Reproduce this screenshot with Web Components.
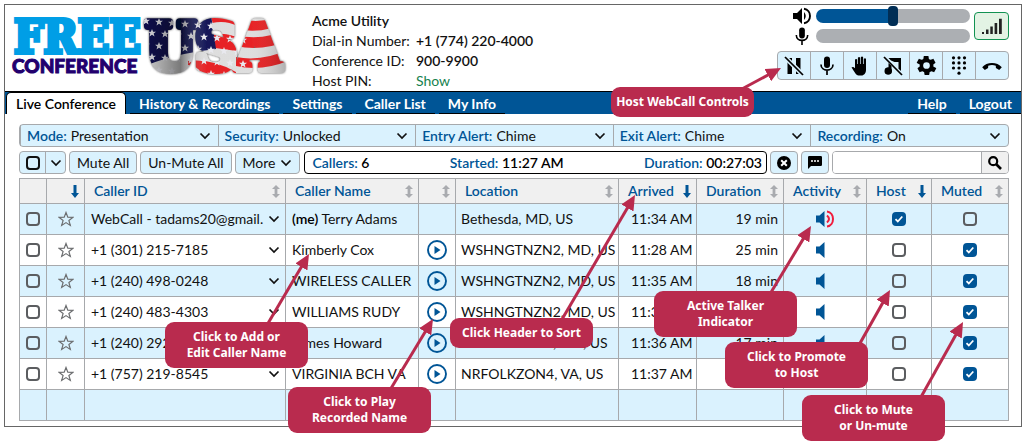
<!DOCTYPE html>
<html lang="en">
<head>
<meta charset="utf-8">
<title>Live Conference</title>
<style>
  body { margin: 0; background: #fff; color: #111; font-family: Lato, "Liberation Sans", sans-serif; font-size: 14px; line-height: 20px;
    --blue: #005596; --pale: #daf2fe; --line: #a7a9ac; --berry: #b92b4e; --medium: 600; }
</style>
</head>
<body>
<conference-app></conference-app>
<script>
const ICONS = {
  chevron: ['0 0 12 8', '<path d="M1.500 1.500 6 6l4.500-4.500" fill="none" stroke="currentColor" stroke-width="1.700"/>'],
  down: ['0 0 8 13', '<path d="M2.500 0h3v8H8l-4 5-4-5h2.500z" fill="currentColor"/>'],
  updown: ['0 0 8 13', '<path d="M4 0l4 4H5.400v5H8l-4 4-4-4h2.600V4H0z" fill="currentColor"/>'],
  star: ['0 0 16 16', '<path d="M8 1.500l1.800 4.700 5 .2-3.900 3.100 1.400 4.900L8 11.600l-4.300 2.800 1.400-4.900L1.200 6.400l5-.2z" fill="none" stroke="currentColor" stroke-width="1.200"/>'],
  play: ['0 0 20 20', '<circle cx="10" cy="10" r="9" fill="none" stroke="currentColor" stroke-width="1.900"/><path d="M7.500 6v8l6-4z" fill="currentColor"/>'],
  speaker: ['0 0 20 18', '<path d="M1 6h4l5-5v16l-5-5H1z" fill="currentColor"/><path d="M12 5q3.500 4 0 8z" fill="currentColor"/><path d="M12 1.800c8 1 8 13.400 0 14.400" fill="none" stroke="currentColor" stroke-width="1.900"/>'],
  quiet: ['0 0 20 18', '<path d="M1 5.500h3.500l5-4.500v16l-5-4.500H1z" fill="currentColor"/>'],
  talking: ['0 0 20 18', '<path d="M1 5.500h3.500l5-4.500v16l-5-4.500H1z" fill="currentColor"/><path d="M12 5.500q4 3.500 0 7" fill="none" stroke="#f01c3c" stroke-width="2"/><path d="M12 1.500c8 1 8 14 0 15" fill="none" stroke="#f01c3c" stroke-width="2"/>'],
  mic: ['0 0 14 20', '<rect x="4" y="0.500" width="6" height="11.500" rx="3" fill="currentColor"/><path d="M1 8.500c0 7.500 12 7.500 12 0M7 14v5" fill="none" stroke="currentColor" stroke-width="1.700"/>'],
  pause: ['0 0 20 20', '<path d="M3.500 2H8v16H3.500zM12 2h4.500v16H12z" fill="currentColor"/><path d="M1 1l18 18" stroke="#daf2fe" stroke-width="4.500"/><path d="M1 1l18 18" stroke="currentColor" stroke-width="1.700"/>'],
  hand: ['0 0 20 20', '<path d="M5 3.500q1.200-1 2.200 0V8h.7V1.700q1.200-1.200 2.300 0V8h.7V1q1.200-1 2.200 0v7h.7V2.700q1.200-1 2.200 0V14c0 3-2 5.500-4.500 5.500H8.500C6 19.500 4 15 1.500 11.500q1.500-1.500 3.500.8z" fill="currentColor"/>'],
  music: ['0 0 20 20', '<path d="M5.500 2H18v13l-2.500-2.200V6h-4L8 4.500zM5.500 7l3 2.700V15a3.500 3.500 0 1 1-3-3.400z" fill="currentColor"/><circle cx="5.500" cy="15" r="3.500" fill="currentColor"/><path d="M1 1l18 18" stroke="currentColor" stroke-width="1.700"/>'],
  gear: ['0 0 24 24', '<path fill="currentColor" d="M19.100 13c0-.3.100-.6.100-1s0-.7-.1-1l2.100-1.600c.2-.1.200-.4.100-.6l-2-3.500c-.1-.2-.4-.3-.6-.2l-2.500 1c-.5-.4-1.100-.7-1.700-1l-.4-2.600c0-.2-.2-.4-.5-.4h-4c-.3 0-.5.200-.5.400l-.4 2.600c-.6.300-1.200.6-1.700 1l-2.500-1c-.2-.1-.5 0-.6.200l-2 3.500c-.1.200-.1.500.1.600L4.900 11v2l-2.100 1.600c-.2.100-.2.400-.1.600l2 3.500c.1.200.4.300.6.200l2.500-1c.5.400 1.100.7 1.700 1l.4 2.600c0 .2.200.4.500.4h4c.3 0 .5-.2.500-.4l.4-2.600c.6-.3 1.200-.6 1.700-1l2.500 1c.2.100.5 0 .6-.2l2-3.500c.1-.2.100-.5-.1-.6zM12 15.500a3.500 3.500 0 1 1 0-7 3.500 3.500 0 0 1 0 7z"/>'],
  keypad: ['0 0 16 20', '<g fill="currentColor">' + [1.8, 6.900, 12].map(y => [2.500, 8, 13.500].map(x => `<circle cx="${x}" cy="${y}" r="1.600"/>`).join('')).join('') + '<circle cx="8" cy="17.200" r="1.600"/></g>'],
  hangup: ['0 0 22 20', '<path d="M1.200 11.200C5.500 5.500 16.500 5.500 20.800 11.200l-2.600 2.700-3.300-1.900-.1-2.300q-3.800-1.400-7.600 0L7.100 12l-3.300 1.900z" fill="currentColor"/>'],
  signal: ['0 0 20 16', '<path d="M0 14h2v2H0zM4 11.500h2.500V16H4zM8.300 8.500h2.500V16H8.300zM12.600 5h2.600v11h-2.600zM17 .8h2.800V16H17z" fill="currentColor"/>'],
  close: ['0 0 14 14', '<circle cx="7" cy="7" r="7" fill="currentColor"/><path d="M4.200 4.200l5.600 5.600M9.800 4.200 4.200 9.800" stroke="#fff" stroke-width="2"/>'],
  chat: ['0 0 14 13', '<path d="M1.200 0h11.600Q14 0 14 1.200v7.600q0 1.200-1.200 1.200H3L0 13V1.200Q0 0 1.200 0z" fill="currentColor"/><path d="M3 5h2M6 5h2M9 5h2" stroke="#fff" stroke-width="1.600"/>'],
  search: ['0 0 14 14', '<circle cx="5.200" cy="5.200" r="4" fill="none" stroke="currentColor" stroke-width="2.200"/><path d="M8 8l5 5" stroke="currentColor" stroke-width="2.600"/>']
};
const icon = (name, w, h) => `<svg class="icon" aria-hidden="true" width="${w}" height="${h}" viewBox="${ICONS[name][0]}">${ICONS[name][1]}</svg>`;

const COMMON = `*{box-sizing:border-box} svg{display:block;flex:none}
  button,input,select{font:inherit;color:inherit;margin:0}
  button{padding:0;border:0;background:none;cursor:pointer}`;
const CHECKBOX = `input[type=checkbox]{appearance:none;display:block;width:14px;height:14px;margin:0 auto;border:2px solid #5b5d60;border-radius:4px;background:transparent}
  input[type=checkbox]:checked{border-color:var(--blue);background:var(--blue) url("data:image/svg+xml,%3Csvg xmlns='http://www.w3.org/2000/svg' viewBox='0 0 10 10'%3E%3Cpath d='M1.500 5.200l2.300 2.300 4.500-5' fill='none' stroke='white' stroke-width='1.800'/%3E%3C/svg%3E") center/10px no-repeat}`;

function define(name, styles, markup) {
  customElements.define(name, class extends HTMLElement {
    connectedCallback() {
      if (this.shadowRoot) return;
      const root = this.attachShadow({ mode: 'open' });
      root.innerHTML = `<style>${COMMON}${styles}</style>` + (typeof markup === 'function' ? markup(this) : markup);
    }
  });
}

define('brand-logo', ':host{display:block} a{display:block}', () => {
  let stars = '';
  for (let r = 0; r < 5; r++) for (let c = 0; c < 8; c++) {
    const x = 146 + c * 13 + (r % 2) * 6, y = 21 + r * 12 + c;
    stars += `<path transform="translate(${x} ${y})" d="M0-4 1.100-1.200 4-1.200 1.700.6 2.500 3.400 0 1.800-2.500 3.400-1.700.6-4-1.200-1.100-1.200z" fill="#e8e8ee"/>`;
  }
  return `<a href="#"><svg width="290" height="80" viewBox="5 5 290 80" role="img" aria-label="Free Conference USA">
    <defs>
      <linearGradient id="shade" x1="0" x2="1"><stop offset="0" stop-color="#000" stop-opacity="0"/><stop offset=".28" stop-color="#000" stop-opacity=".45"/><stop offset=".45" stop-color="#fff" stop-opacity=".05"/><stop offset=".75" stop-color="#fff" stop-opacity=".05"/><stop offset="1" stop-color="#000" stop-opacity=".25"/></linearGradient>
      <pattern id="flag" patternUnits="userSpaceOnUse" x="138" y="8" width="152" height="72">
        <g transform="translate(-138 -8)">
          <rect x="138" y="8" width="152" height="72" fill="#dcdcdc"/>
          <path d="M188 61Q212 58 236 72V80H205Q200 66 188 65z" fill="#e6191c"/>
          <path d="M210 14q14-4 27 4v9q-12-6-24-3zM213 34q14-2 24 3v14l-22-3z" fill="#e6191c"/>
          <path d="M236 35Q262 42 290 28V40Q262 52 236 46zM236 57Q262 62 290 49V60Q262 72 236 66z" fill="#e6191c"/>
          <path d="M236 18q27 8 54-6v9q-27 14-54 8z" fill="#e6191c"/>
          <path d="M138 8h72l6 41Q170 54 138 69z" fill="#0a0d50"/>
          ${stars}
          <path d="M211 8h26v6q-13-4-26 0zM212 23q14-3 25 3v11q-12-5-24-3z" fill="#dcdcdc"/>
          <rect x="138" y="8" width="152" height="72" fill="url(#shade)"/>
        </g>
      </pattern>
      <filter id="soft" x="-10%" y="-10%" width="120%" height="120%"><feDropShadow dx="0" dy="0" stdDeviation="1" flood-color="#444"/></filter>
    </defs>
    <text x="14" y="53" font-family="DejaVu Serif Condensed, DejaVu Serif" font-weight="700" font-size="46" fill="#009ee6" stroke="#009ee6" stroke-width="4">FREE</text>
    <text x="12" y="73" font-family="Lato" font-weight="900" font-size="19" fill="#22006e" stroke="#22006e" stroke-width="1">CONFERENCE</text>
    <text x="146" y="69" font-family="DejaVu Serif Condensed, DejaVu Serif" font-weight="700" font-size="63" fill="url(#flag)" stroke="url(#flag)" stroke-width="8" stroke-linejoin="round" filter="url(#soft)">USA</text>
  </svg></a>`;
});

define('conference-info', `:host{display:block;padding-top:6px;white-space:nowrap}
  h1,dl,dd{margin:0} h1{font-size:14px;font-weight:var(--medium);line-height:20px}
  dl{display:grid;grid-template-columns:104px auto} dd{font-weight:var(--medium)} a{color:#16824f;font-weight:400;text-decoration:none}`,
  `<h1>Acme Utility</h1><dl><dt>Dial-in Number:</dt><dd>+1 (774) 220-4000</dd><dt>Conference ID:</dt><dd>900-9900</dd><dt>Host PIN:</dt><dd><a href="#">Show</a></dd></dl>`);

define('webcall-controls', `:host{display:flex;flex-direction:column;gap:5px;color:#000}
  .levels{display:grid;grid-template-columns:20px 154px 35px;column-gap:4px;justify-content:end;height:41px}
  .levels>*{align-self:center;justify-self:center}
  .signal{grid-column:3;grid-row:1/3;width:35px;height:28px;border:1px solid #129252;border-radius:4px;background:#e3f3e4;display:grid;place-items:center;color:#222}
  input{appearance:none;width:154px;height:20px;background:none}
  input::-webkit-slider-runnable-track{height:14px;border-radius:7px;background:linear-gradient(90deg,var(--blue) 50%,#acafb3 50%)}
  input::-webkit-slider-thumb{appearance:none;width:10px;height:20px;margin-top:-3px;border-radius:4px;background:#012e55}
  .bar{width:154px;height:14px;border-radius:7px;background:#acafb3}
  .buttons{display:flex;border:1px solid var(--line);border-radius:4px;background:var(--pale);width:232px;height:29px}
  .buttons button{flex:1;display:grid;place-items:center}
  .buttons button+button{border-left:1px solid var(--line)}`,
  `<div class="levels">${icon('speaker', 20, 18)}<input type="range" aria-label="Speaker volume" value="50">
    <button class="signal" aria-label="Connection quality">${icon('signal', 20, 16)}</button>
    ${icon('mic', 14, 19)}<div class="bar" role="meter" aria-label="Microphone level" aria-valuenow="0"></div></div>
  <div class="buttons">${[['pause', 20, 'Hold'], ['mic', 14, 'Mute'], ['hand', 20, 'Raise hand'], ['music', 20, 'Music off'], ['gear', 23, 'Settings'], ['keypad', 16, 'Keypad'], ['hangup', 22, 'Hang up']]
    .map(([n, w, l]) => `<button aria-label="${l}">${icon(n, w, n === 'gear' ? 23 : 20)}</button>`).join('')}</div>`);

define('nav-tab', `:host{display:block;border-bottom:1px solid #000;color:#fff;font-weight:700}
  a{display:block;padding:2px 9px 0;line-height:20px;height:21px;color:inherit;text-decoration:none;white-space:nowrap}
  :host([current]){background:#fff;color:#000;font-weight:var(--medium);border:1px solid #000;border-bottom:0;border-radius:5px 5px 0 0}
  :host([current]) a{padding-top:1px}`,
  '<a href="#"><slot></slot></a>');

define('nav-bar', `:host{display:flex;align-items:flex-end;gap:4px;padding:0 0 0 1px;height:23px;border-top:1px solid #000;background:var(--blue)} .space{flex:1}`,
  `<nav-tab current>Live Conference</nav-tab><nav-tab>History &amp; Recordings</nav-tab><nav-tab>Settings</nav-tab><nav-tab>Caller List</nav-tab><nav-tab>My Info</nav-tab><span class="space"></span><nav-tab>Help</nav-tab><nav-tab>Logout</nav-tab>`);

define('setting-select', `:host{display:flex;flex:1;align-items:center;min-width:0;padding:0 7px 0 6px;position:relative}
  :host(:not(:first-child)){border-left:1px solid var(--line)}
  label{color:var(--blue);font-weight:var(--medium);padding-right:4px;white-space:nowrap}
  select{appearance:none;border:0;padding:0;background:none;flex:1;min-width:0;height:20px;line-height:20px}
  svg{pointer-events:none}`,
  el => `<label for="s">${el.getAttribute('label')}:</label><select id="s"><option>${el.getAttribute('value')}</option></select>${icon('chevron', 12, 8)}`);

define('settings-bar', `:host{display:flex;height:23px;box-sizing:border-box;border:1px solid var(--line);border-radius:4px;background:var(--pale)}`,
  [['Mode', 'Presentation'], ['Security', 'Unlocked'], ['Entry Alert', 'Chime'], ['Exit Alert', 'Chime'], ['Recording', 'On']].map(([l, v]) => `<setting-select label="${l}" value="${v}"></setting-select>`).join(''));

define('call-toolbar', `:host{display:flex;gap:3px;height:23px;line-height:20px}
  ${CHECKBOX}
  .box{display:flex;align-items:center;justify-content:center;border:1px solid var(--line);border-radius:4px;background:var(--pale);padding:0 7px;white-space:nowrap;height:23px}
  .actions{display:flex;gap:3px;padding-right:1px}
  .more{gap:5px} .sq{width:28px;padding:0;color:#000}
  .pick{width:47px;padding:0} .pick label{flex:1} .pick button{width:20px;height:21px;border-left:1px solid var(--line);display:grid;place-items:center}
  .pick input{border-color:#111}
  .status{flex:1;display:flex;align-items:center;justify-content:space-between;border:1px solid #000;border-radius:4px;padding:0 4px 0 7px;color:var(--blue);font-weight:var(--medium)}
  b{font-weight:var(--medium);color:#000}
  form{display:flex;width:177px;border:1px solid var(--line);border-radius:4px;overflow:hidden}
  form input{flex:1;min-width:0;border:0;padding:0 6px;outline:0}
  form button{width:27px;border-left:1px solid var(--line);background:#f0f0f0;display:grid;place-items:center;color:#000}`,
  `<div class="actions"><div class="box pick"><label><input type="checkbox" aria-label="Select all"></label><button aria-label="Selection menu">${icon('chevron', 12, 8)}</button></div>
  <button class="box">Mute All</button><button class="box">Un-Mute All</button><button class="box more">More ${icon('chevron', 12, 8)}</button></div>
  <div class="status"><span>Callers: <b>6</b></span><span>Started: <b>11:27 AM</b></span><span>Duration: <b>00:27:03</b></span></div>
  <button class="box sq" aria-label="Clear">${icon('close', 14, 14)}</button><button class="box sq" aria-label="Chat">${icon('chat', 14, 13)}</button>
  <form><input type="text" aria-label="Search callers"><button type="button" aria-label="Search">${icon('search', 14, 14)}</button></form>`);

const CALLERS = [
  ['WebCall - tadams20@gmail.', '<b>(me)</b> Terry Adams', 'Bethesda, MD, US', '11:34 AM', '19 min', 1],
  ['+1 (301) 215-7185', 'Kimberly Cox', 'WSHNGTNZN2, MD, US', '11:28 AM', '25 min'],
  ['+1 (240) 498-0248', 'WIRELESS CALLER', 'WSHNGTNZN2, MD, US', '11:35 AM', '18 min'],
  ['+1 (240) 483-4303', 'WILLIAMS RUDY', 'WSHNGTNZN2, MD, US', '11:35 AM', '18 min'],
  ['+1 (240) 292-6140', 'James Howard', 'GTHRSBGZN1, MD, US', '11:36 AM', '17 min'],
  ['+1 (757) 219-8545', 'VIRGINIA BCH VA', 'NRFOLKZON4, VA, US', '11:37 AM', '16 min']
];
const HEADS = [['', 27], ['', 38, 'down'], ['Caller ID', 201, 'updown'], ['Caller Name', 133, 'updown'], ['', 37, 'updown'], ['Location', 0, 'updown'], ['Arrived', 78, 'down'], ['Duration', 87, 'updown'], ['Activity', 83, 'updown'], ['Host', 65, 'down'], ['Muted', 77, 'updown']];

define('caller-table', `:host{display:block} ${CHECKBOX}
  table{width:100%;border-collapse:collapse;table-layout:fixed}
  th,td{border:1px solid var(--line);padding:0 5px 0 6px;height:31px;white-space:nowrap;text-align:left;font-weight:400}
  th{height:25px;background:#f0f0f0;color:var(--blue);font-weight:var(--medium);padding:0 5px 0 9px}
  .head{display:flex;align-items:center;justify-content:space-between} .head svg{margin-left:auto} .updown{color:#a9abaf}
  tbody tr:nth-child(odd){background:var(--pale)}
  td.c{padding:0} td.c svg{margin:0 auto} td.r{text-align:right} b{font-weight:var(--medium);color:#000}
  .id{display:flex;align-items:center;justify-content:space-between}
  button{display:block;margin:0 auto} .id button{margin:0} .star{color:#6c6e70} .blue{color:var(--blue)}
  td:nth-child(6){padding:0 0 0 5px} td:nth-child(7){padding-left:12px}`,
  `<table><colgroup>${HEADS.map(h => `<col${h[1] ? ` style="width:${h[1]}px"` : ''}>`).join('')}</colgroup>
  <thead><tr>${HEADS.map(([t, , i]) => `<th scope="col"><div class="head"><span>${t}</span>${i ? `<span class="${i}">${icon(i, 8, 13)}</span>` : ''}</div></th>`).join('')}</tr></thead>
  <tbody>${CALLERS.map(([id, name, loc, arr, dur, me], n) => `<tr>
    <td class="c"><input type="checkbox" aria-label="Select caller ${n + 1}"></td>
    <td class="c"><button class="star" aria-label="Favorite">${icon('star', 16, 16)}</button></td>
    <td><div class="id"><span>${id}</span><button aria-label="Caller menu">${icon('chevron', 12, 8)}</button></div></td>
    <td>${name}</td>
    <td class="c">${me ? '' : `<button class="blue" aria-label="Play recorded name">${icon('play', 20, 20)}</button>`}</td>
    <td>${loc}</td><td>${arr}</td><td class="r">${dur}</td>
    <td class="c blue">${icon(me ? 'talking' : 'quiet', 20, 18)}</td>
    <td class="c"><input type="checkbox" aria-label="Host"${me ? ' checked' : ''}></td>
    <td class="c"><input type="checkbox" aria-label="Muted"${me ? '' : ' checked'}></td></tr>`).join('')}
    <tr>${'<td></td>'.repeat(11)}</tr></tbody></table>`);

define('call-out', `:host{display:block;position:absolute;width:143px;padding:7px 4px;box-sizing:border-box;border-radius:9px;background:var(--berry);color:#fff;text-align:center;
  font:700 12px/16px "Noto Sans","Open Sans",sans-serif;white-space:nowrap}`, '<slot></slot>');

const NOTES = [
  ['Host WebCall Controls', 611, 87, 740, 90, 781, 68],
  ['Click to Add or<br>Edit Caller Name', 165, 322, 267, 325, 309, 254],
  ['Click to Play<br>Recorded Name', 288, 387, 390, 390, 433, 319],
  ['Click Header to Sort', 450, 318, 561, 321, 635, 195],
  ['Active Talker<br>Indicator', 654, 291, 770, 294, 811, 226],
  ['Click to Promote<br>to Host', 725, 342, 859, 345, 890, 290],
  ['Click to Mute<br>or Un-mute', 802, 395, 921, 397, 963, 322]
];
define('note-layer', `:host{position:absolute;inset:0;pointer-events:none} svg{position:absolute;left:0;top:0;overflow:visible}`,
  `<svg width="100%" height="100%" aria-hidden="true"><defs><marker id="head" markerUnits="userSpaceOnUse" markerWidth="16" markerHeight="14" refX="15" refY="7" orient="auto"><path d="M0 0l15 7-15 7z" fill="#b92b4e"/></marker></defs>
  ${NOTES.map(n => `<path d="M${n[3]} ${n[4]}L${n[5]} ${n[6]}" stroke="#b92b4e" stroke-width="3" stroke-dasharray="${Math.round(Math.hypot(n[5] - n[3], n[6] - n[4])) - 12} 99" marker-end="url(#head)"/>`).join('')}</svg>
  ${NOTES.map(n => `<call-out style="left:${n[1]}px;top:${n[2]}px">${n[0]}</call-out>`).join('')}`);

define('conference-app', `:host{display:block;position:relative;padding:4px 5px 18px 4px}
  .frame{border:1px solid #666}
  header{display:flex;padding-right:12px} brand-logo{width:307px} conference-info{flex:1}
  main{display:flex;flex-direction:column;gap:4px;padding:10px 12px 5px 14px}`,
  `<div class="frame"><header><brand-logo></brand-logo><conference-info></conference-info><webcall-controls></webcall-controls></header>
  <nav-bar></nav-bar><main><settings-bar></settings-bar><call-toolbar></call-toolbar><caller-table></caller-table></main></div><note-layer></note-layer>`);
</script>
</body>
</html>
